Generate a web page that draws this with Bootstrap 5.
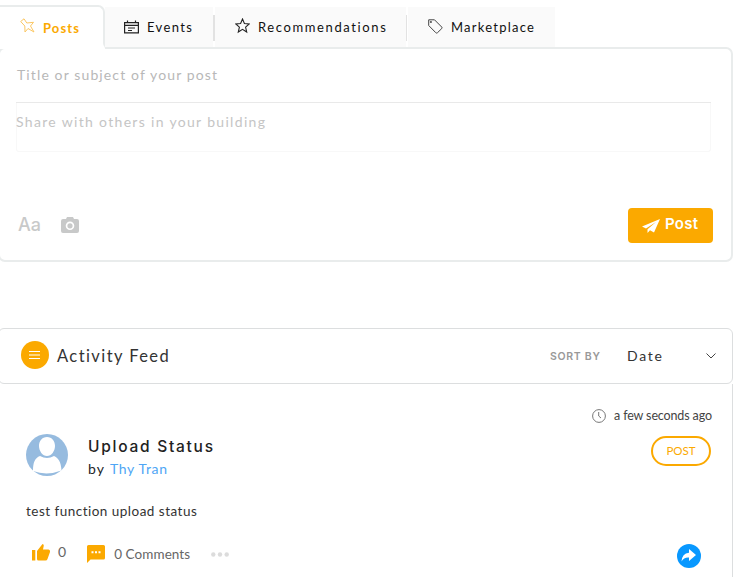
<!DOCTYPE html>
<html lang="en">
<head>
<meta charset="utf-8">
<meta name="viewport" content="width=device-width, initial-scale=1">
<title>Activity Feed</title>
<link href="https://cdn.jsdelivr.net/npm/bootstrap@5.3.0/dist/css/bootstrap.min.css" rel="stylesheet">
<style>
body{font-family:Lato,"Open Sans",sans-serif;font-size:14px;line-height:20px;color:#333;background:#fff;overflow:hidden}
.composer{width:735px;margin-left:-2px;height:262px;padding-top:5px}
.tabs{height:44px;position:relative;z-index:1}
.tab-active{width:107px;height:23px;border:solid #e9ecec;border-width:2px 2px 0 0;border-top-right-radius:7px;color:#fba900;padding:11px 0 0 22px;box-shadow:0 21px 0 #fff}
.tab-rest{height:24px;margin:0 8px 0 -2px;border:solid #e9ecec;border-width:0 0 2px 2px;border-bottom-left-radius:6px}
.tab{height:40px;background:#fafafa;color:#111;font-size:13px}
.sep{width:2px;height:26px;background:#e2e2e2;margin-bottom:6px}
.t{white-space:nowrap;display:inline-block}
.panel{height:215px;margin-top:-2px;border:2px solid #e9ecec;border-radius:7px;padding:16px 20px 0 16px}
.subject{height:38px;border-bottom:1px solid #e9e9e9;color:#b8b8b8;padding-left:1px}
.message{height:49px;border:solid #f8f8f8;border-width:0 1px 1px;padding-top:9px;color:#c5c5c5;border-radius:0 0 3px 3px}
.tools{padding-top:56px;color:#c8c9c9}
.btn-send{width:85px;height:35px;background:#fba900;color:#fff;border-radius:4px;padding:0 0 4px 14px}
.btn-send:hover{background:#ee9f00;color:#fff}
.feed{width:735px;margin:66px 0 0 -2px}
.feed-head{height:56px;border:1px solid #dcdedf;border-radius:6px;padding:0 16px 2px 22px}
.feed-body{height:194px;border-right:1px solid #dcdedf;padding:21px 20px 0 28px}
.disc{width:28px;height:28px;background:#fba900}
.pill{width:60px;height:30px;border:2px solid #fba900;color:#fba900}
.link{color:#4fa6f5;text-decoration:none}
svg{flex:none;display:block}
</style>
</head>
<body>
<section class="composer">
  <nav class="tabs d-flex align-items-start">
    <div class="tab-active d-flex flex-shrink-0">
      <svg width="15" height="16" viewBox="0 0 15 16" fill="none" stroke="#fbc763" stroke-width="1" style="overflow:visible"><path d="M.7 3.5 4 .8 6.800 5 13.500 4.300 10.500 8 14 14 8 10.500 5 14 4.800 8Z"/></svg>
      <span class="t" style="font-size:13px;margin-left:8px" data-w="36"><b>Posts</b></span>
    </div>
    <div class="tab-rest d-flex align-items-end flex-grow-1 align-self-end">
      <div class="tab d-flex align-items-center" style="width:108px;padding-left:19px">
        <svg width="15" height="14" viewBox="0 0 15 14" fill="none" stroke="#222" stroke-width="1.2"><path d="M.6 2.6H14.4V12.9H.6ZM.6 5.3H14.4M3.5.5V3M11.5.5V3M4 8H11M4 10.5H8"/></svg>
        <span class="t" style="margin-left:8px" data-w="45">Events</span>
      </div>
      <i class="sep"></i>
      <div class="tab d-flex align-items-center" style="width:191px;padding-left:20px">
        <svg style="margin-top:-2px" width="15" height="16" viewBox="0 0 15 16" fill="none" stroke="#222" stroke-width="1.1"><path d="M7.5 1 9.4 5.5 14.2 5.9 10.6 9.1 11.7 14 7.5 11.4 3.3 14 4.4 9.1.8 5.9 5.6 5.5Z"/></svg>
        <span class="t" style="margin-left:8px" data-w="128">Recommendations</span>
      </div>
      <i class="sep" style="width:1px;margin-right:1px"></i>
      <div class="tab d-flex align-items-center" style="width:147px;padding-left:20px">
        <svg style="margin-top:-1px" width="15" height="16" viewBox="0 0 15 16" fill="none" stroke="#444" stroke-width="1"><path d="M.7.8H6.5L13.7 8Q14.5 8.8 13.7 9.6L9.5 13.7Q8.6 14.5 7.8 13.7L.7 6.5ZM2.4 2.5H3.4V3.5H2.4Z"/></svg>
        <span class="t" style="margin-left:8px" data-w="83">Marketplace</span>
      </div>
    </div>
  </nav>
  <div class="panel">
    <div class="subject"><span class="t" data-w="200">Title or subject of your post</span></div>
    <div class="message"><span class="t" style="margin-left:-1px" data-w="249">Share with others in your building</span></div>
    <div class="tools d-flex">
      <span class="t" style="font:500 18px/34px Inter,sans-serif;margin-left:2px" data-w="23">Aa</span>
      <svg style="margin:9px 0 0 20px" width="18" height="16" viewBox="0 0 18 16"><path fill="#c8c9c9" fill-rule="evenodd" d="M5 2 6 0H12L13 2H16Q18 2 18 4V14Q18 16 16 16H2Q0 16 0 14V4Q0 2 2 2ZM9 4.5A4.3 4.3 0 1 0 9 13.1 4.3 4.3 0 1 0 9 4.5ZM9 6.2A2.6 2.6 0 1 1 9 11.4 2.6 2.6 0 1 1 9 6.2Z"/></svg>
      <button class="btn btn-send ms-auto d-flex align-items-center border-0" style="margin-right:-2px">
        <svg style="margin-top:4px" width="18" height="14" viewBox="0 0 18 14"><path fill="#fff" d="M18 0 0 7.5 4 9.5 14 3 5.5 10.3V14L8 11.3 12 13.5Z"/></svg>
        <span class="t" style="font:600 15px/20px Inter,sans-serif;margin-left:5px" data-w="33">Post</span>
      </button>
    </div>
  </div>
</section>

<section class="feed">
  <header class="feed-head d-flex align-items-center">
    <span class="disc rounded-circle d-flex align-items-center justify-content-center"><svg width="12" height="10" viewBox="0 0 12 10" stroke="#fff"><path d="M0 1.5H11M0 5H11M0 8.5H11"/></svg></span>
    <span class="t" style="font-size:16.5px;margin:1px 0 0 8px" data-w="112">Activity Feed</span>
    <span class="t ms-auto" style="font:600 10.5px/20px Inter,sans-serif;color:#999;margin-top:3px" data-w="50">SORT BY</span>
    <span class="t" style="margin-left:27px;margin-top:2px" data-w="35">Date</span>
    <svg style="margin:1px 0 0 44px" width="10" height="6" viewBox="0 0 10 6" fill="none" stroke="#444"><path d="M.5.5 5 5 9.5.5"/></svg>
  </header>
  <div class="feed-body">
    <div class="d-flex align-items-center justify-content-end" style="height:22px">
      <svg width="14" height="14" viewBox="0 0 14 14" fill="none" stroke="#777"><circle cx="7" cy="7" r="6.4"/><path d="M6.7 3V7L9 9"/></svg>
      <span class="t" style="font-size:12.5px;color:#444;margin-left:8px" data-w="98">a few seconds ago</span>
    </div>
    <div class="d-flex" style="margin-top:7px;height:64px">
      <svg width="42" height="42" viewBox="0 0 42 42"><circle cx="21" cy="21" r="21" fill="#96bbdf"/><path fill="#fff" d="M21 3C26 3 29 7 29 12S25.500 22 21 22 13 17 13 12 16 3 21 3ZM14 22Q21 26 28 22C32 24 35 27 35.500 36.500Q21 42 7 37C7 28 9 24 14 22Z"/></svg>
      <div style="margin-left:20px">
        <div style="height:24px;padding-top:3px"><span class="t" style="font:500 15.500px/20px Inter,sans-serif;color:#222" data-w="125">Upload Status</span></div>
        <div class="d-flex" style="padding-top:1px"><span class="t text-dark" data-w="16">by</span><a href="#" class="link t" style="margin-left:6px" data-w="57">Thy Tran</a></div>
      </div>
      <span class="pill rounded-pill ms-auto d-flex align-items-center justify-content-center" style="margin:2px 1px 0 0"><span class="t" style="font-size:11.5px" data-w="29">POST</span></span>
    </div>
    <div style="margin-top:3px"><span class="t" style="font-size:13.5px" data-w="171">test function upload status</span></div>
    <div class="d-flex align-items-center" style="height:30px;margin-top:16px;padding-left:6px;color:#666">
      <svg width="18" height="17" viewBox="0 0 18 17" fill="#fba900"><path d="M0 6H3.300V16.500H0ZM5 7 10.500 0Q12 .5 11.700 2L11 5.500H16.500Q18.500 6 18 8L15.500 15Q15 16.500 13.500 16.500H6.500Q5 16.500 5 15Z"/></svg>
      <span class="t" style="font-size:14px;margin-left:8px" data-w="8">0</span>
      <svg style="margin:4px 0 0 21px" width="18" height="18" viewBox="0 0 18 18"><path fill="#fba900" d="M1.500 0H16.500Q18 0 18 1.500V13Q18 14.500 16.500 14.500H3.500L0 18V1.500Q0 0 1.500 0Z"/><path fill="#fff" d="M4.500 6.300H6.500V8.300H4.500ZM8 6.300H10V8.300H8ZM11.500 6.300H13.500V8.300H11.500Z"/></svg>
      <span class="t" style="font-size:13.5px;margin:3px 0 0 9px" data-w="76">0 Comments</span>
      <svg style="margin:5px 0 0 21px" width="18" height="5" viewBox="0 0 18 5" fill="#dcdcdc"><circle cx="2.300" cy="2.500" r="2.200"/><circle cx="9" cy="2.500" r="2.200"/><circle cx="15.700" cy="2.500" r="2.200"/></svg>
      <svg class="ms-auto" style="margin:7px 11px 0 0" width="24" height="24" viewBox="0 0 24 24"><circle cx="12" cy="12" r="12" fill="#0898ff"/><path fill="#fff" d="M12 5 19 11 12 17V13.500Q7 13 4.500 17.500Q5 9.500 12 8.800Z"/></svg>
    </div>
  </div>
</section>
<script src="https://cdn.jsdelivr.net/npm/bootstrap@5.3.0/dist/js/bootstrap.bundle.min.js"></script>
<script>
/* Track each label out to its design width. */
document.querySelectorAll('[data-w]').forEach(function(el){
  var gap=(el.dataset.w-el.getBoundingClientRect().width)/(el.textContent.length-1||1);
  if(el.textContent.length>1){el.style.letterSpacing=gap+'px';el.style.marginRight=-gap+'px';}
});
</script>
</body>
</html>
